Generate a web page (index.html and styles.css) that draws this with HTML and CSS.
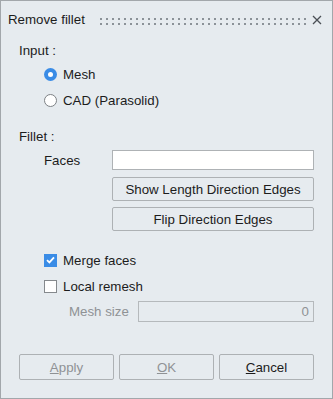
FILE: index.html
```html
<!DOCTYPE html>
<html lang="en">
<head>
    <meta charset="UTF-8">
    <title>Remove fillet</title>
    <link rel="stylesheet" href="styles.css">
</head>
<body>

    <div class="dialog">
        <div class="titlebar">
            <span class="title">Remove fillet</span>
            <svg class="grip" height="7">
                <defs>
                    <pattern id="dots" width="6" height="5" patternUnits="userSpaceOnUse">
                        <rect width="2" height="2" fill="#8b9298"/>
                    </pattern>
                </defs>
                <rect width="100%" height="7" fill="url(#dots)"/>
            </svg>
            <svg class="close" width="10" height="10" viewBox="0 0 10 10">
                <path d="M1 1L9 9M9 1L1 9" stroke="#4a4f55" stroke-width="1.3"/>
            </svg>
        </div>

        <div class="section">
            <div class="group-label">Input :</div>
            <label class="option">
                <span class="radio checked"></span>Mesh
            </label>
            <label class="option gap">
                <span class="radio"></span>CAD (Parasolid)
            </label>
        </div>

        <div class="section fillet">
            <div class="group-label">Fillet :</div>
            <div class="field faces">
                <span class="field-label">Faces</span>
                <input type="text" class="text-input">
            </div>
            <button class="btn wide first">Show Length Direction Edges</button>
            <button class="btn wide second">Flip Direction Edges</button>

            <label class="option merge">
                <span class="check checked">
                    <svg width="9" height="8" viewBox="0 0 9 8"><path d="M1 4.2L3.4 6.4L8 1.4" stroke="#fff" stroke-width="1.8" fill="none"/></svg>
                </span>Merge faces
            </label>
            <label class="option gap">
                <span class="check"></span>Local remesh
            </label>
            <div class="field mesh-size">
                <span class="field-label disabled">Mesh size</span>
                <input type="text" class="text-input readonly" value="0" disabled>
            </div>
        </div>

        <div class="actions">
            <button class="btn disabled"><u>A</u>pply</button>
            <button class="btn disabled"><u>O</u>K</button>
            <button class="btn"><u>C</u>ancel</button>
        </div>
    </div>

</body>
</html>
```

FILE: styles.css
```css
* {
    margin: 0;
    padding: 0;
    box-sizing: border-box;
    font-family: 'Liberation Sans', Arial, sans-serif;
}
body {
    background: #e6ebef;
    color: #1c1c1c;
    font-size: 13.3px;
}
.dialog {
    width: 333px;
    height: 399px;
    background: #e6ebef;
    border: 1px solid #a2a7ab;
    display: flex;
    flex-direction: column;
}
.titlebar {
    height: 36px;
    display: flex;
    align-items: center;
    padding: 0 10px 0 7px;
}
.title {
    padding-top: 1px;
}
.grip {
    flex: 1;
    margin-left: 15px;
    margin-right: 6px;
    margin-top: 4px;
}
.close {
    margin-top: 1px;
}
.section {
    padding: 3px 18px 0;
}
.group-label {
    height: 22px;
    line-height: 22px;
}
.option {
    display: flex;
    align-items: center;
    height: 24px;
    padding-left: 25px;
}
.option.gap {
    margin-top: 2px;
}
.radio {
    width: 13px;
    height: 13px;
    border-radius: 50%;
    border: 1px solid #7d8185;
    background: #fff;
    margin-right: 6px;
    display: flex;
    align-items: center;
    justify-content: center;
}
.radio.checked {
    border: none;
    background: #3a8ce6;
}
.radio.checked::after {
    content: "";
    width: 5px;
    height: 5px;
    border-radius: 50%;
    background: #fff;
}
.check {
    width: 13px;
    height: 13px;
    border: 1px solid #85898d;
    background: #fff;
    margin-right: 6px;
    display: flex;
    align-items: center;
    justify-content: center;
}
.check.checked {
    border: none;
    background: #3a8ce6;
}
.fillet {
    padding-top: 14px;
}
.field {
    display: flex;
    align-items: center;
}
.field-label {
    flex-shrink: 0;
}
.faces {
    margin-top: 2px;
    padding-left: 25px;
}
.faces .field-label {
    width: 68px;
}
.text-input {
    flex: 1;
    min-width: 0;
    height: 20px;
    border: 1px solid #aeb2b5;
    background: #fff;
    font-size: 13.3px;
    padding: 0 4px;
    outline: none;
}
.btn {
    display: block;
    height: 24px;
    background: #e6ebef;
    border: 1px solid #adb1b4;
    border-radius: 2px;
    font-size: 13.3px;
    color: #1c1c1c;
}
.btn.wide {
    width: 202px;
    margin-left: 93px;
}
.btn.first {
    margin-top: 7px;
}
.btn.second {
    margin-top: 6px;
}
.btn.disabled {
    color: #8f9295;
}
.merge {
    margin-top: 17px;
}
.mesh-size {
    margin-top: 3px;
    padding-left: 50px;
}
.mesh-size .field-label {
    width: 69px;
}
.field-label.disabled {
    color: #8f9295;
}
.text-input.readonly {
    height: 21px;
    background: #e6ebef;
    border-color: #b5b9bc;
    color: #8f9295;
    text-align: right;
}
.actions {
    margin-top: auto;
    padding: 0 18px 18px;
    display: flex;
    gap: 5px;
}
.actions .btn {
    width: 95px;
    height: 26px;
}
```
